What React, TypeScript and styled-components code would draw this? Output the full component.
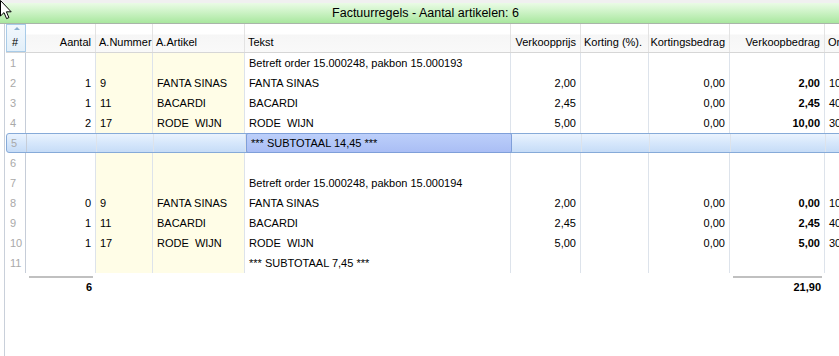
import { FC } from 'react';
import styled, { createGlobalStyle, css } from 'styled-components';

const GlobalStyle = createGlobalStyle`
  html, body {
    margin: 0;
    padding: 0;
    background: #ffffff;
    overflow: hidden;
  }
  body {
    font-family: 'Liberation Sans', Arial, sans-serif;
    font-size: 11px;
    color: #000;
  }
`;

const COLUMNS = '20px 70px 57px 92px 266px 70px 68px 81px 95px 70px';
const GRID_WIDTH = '889px';

const Window = styled.div`
  position: relative;
  width: 839px;
  height: 356px;
  overflow: hidden;
  background: #fff;
`;

const TopStrip = styled.div`
  height: 3px;
  background: #f0f0f0;
`;

const TitleBar = styled.div`
  height: 20px;
  display: flex;
  align-items: center;
  justify-content: center;
  background: linear-gradient(to bottom, #eafbe6 0%, #cdf3c6 45%, #a9e79f 100%);
  border-bottom: 1px solid #a9b5a9;
  font-size: 12.5px;
  padding-left: 12px;
`;

const Panel = styled.div`
  margin-left: 4px;
  border-left: 1px solid #c9d0da;
  height: 332px;
  padding-left: 1px;
`;

const HeaderRow = styled.div`
  display: grid;
  grid-template-columns: ${COLUMNS};
  width: ${GRID_WIDTH};
  height: 28px;
  border-bottom: 1px solid #d6d6d6;
  background: linear-gradient(to bottom, #ffffff 0%, #ffffff 35%, #f6f6f6 40%, #f9f9f9 100%);
`;

const HeaderCell = styled.div<{ $align?: 'left' | 'right'; $sorted?: boolean }>`
  position: relative;
  display: flex;
  align-items: flex-end;
  justify-content: ${(p) => (p.$align === 'right' ? 'flex-end' : 'flex-start')};
  padding: 0 4px 4px 3px;
  border-right: 1px solid #e3e3e3;
  white-space: nowrap;
  overflow: hidden;
  ${(p) =>
    p.$sorted &&
    css`
      background: linear-gradient(to bottom, #f2f8fd, #e2eff9);
      border: 1px solid #a8cbe8;
      padding-left: 5px;
      padding-bottom: 3px;
    `}
`;

const SortArrow = styled.span`
  position: absolute;
  top: 2px;
  left: 7px;
  width: 0;
  height: 0;
  border-left: 3px solid transparent;
  border-right: 3px solid transparent;
  border-bottom: 3px solid #8ab0d0;
`;

const Row = styled.div<{ $selected?: boolean }>`
  display: grid;
  grid-template-columns: ${COLUMNS};
  width: ${GRID_WIDTH};
  height: 20px;
  box-sizing: border-box;
  ${(p) =>
    p.$selected &&
    css`
      background: linear-gradient(to bottom, #eaf3fe 0%, #d6e7fb 50%, #c6dcf7 100%);
      border: 1px solid #86aad8;
      border-radius: 3px;
    `}
`;

const Cell = styled.div<{
  $align?: 'left' | 'right';
  $yellow?: boolean;
  $bold?: boolean;
  $muted?: boolean;
  $focus?: boolean;
  $dark?: boolean;
}>`
  display: flex;
  align-items: center;
  justify-content: ${(p) => (p.$align === 'right' ? 'flex-end' : 'flex-start')};
  padding: 0 4px;
  white-space: pre;
  overflow: hidden;
  border-right: 1px solid ${(p) => (p.$dark ? '#c6cdd8' : '#dde3eb')};
  background: ${(p) => (p.$yellow ? '#fffde7' : 'transparent')};
  font-weight: ${(p) => (p.$bold ? 700 : 400)};
  color: ${(p) => (p.$muted ? '#a9a9a9' : '#000')};
  ${(p) =>
    p.$focus &&
    css`
      background: linear-gradient(to bottom, #bccffa, #aabef5);
      border: 1px solid #7f9fd9;
      border-radius: 2px;
      margin: -1px 0;
    `}
`;

const FooterRow = styled.div`
  display: grid;
  grid-template-columns: ${COLUMNS};
  width: ${GRID_WIDTH};
  height: 20px;
  margin-top: 3px;
`;

const Total = styled.div<{ $filled?: boolean }>`
  display: flex;
  align-items: center;
  justify-content: flex-end;
  margin: 0 3px;
  padding-right: 1px;
  font-weight: 700;
  border-top: 2px solid ${(p) => (p.$filled ? '#c0c0c0' : 'transparent')};
`;

const Cursor = styled.svg`
  position: absolute;
  top: 0;
  left: 0;
`;

type Line = {
  n: number;
  aantal?: string;
  nummer?: string;
  artikel?: string;
  tekst?: string;
  prijs?: string;
  korting?: string;
  kortingsbedrag?: string;
  bedrag?: string;
  or?: string;
  selected?: boolean;
};

const lines: Line[] = [
  { n: 1, tekst: 'Betreft order 15.000248, pakbon 15.000193' },
  { n: 2, aantal: '1', nummer: '9', artikel: 'FANTA SINAS', tekst: 'FANTA SINAS', prijs: '2,00', kortingsbedrag: '0,00', bedrag: '2,00', or: '10' },
  { n: 3, aantal: '1', nummer: '11', artikel: 'BACARDI', tekst: 'BACARDI', prijs: '2,45', kortingsbedrag: '0,00', bedrag: '2,45', or: '40' },
  { n: 4, aantal: '2', nummer: '17', artikel: 'RODE  WIJN', tekst: 'RODE  WIJN', prijs: '5,00', kortingsbedrag: '0,00', bedrag: '10,00', or: '30' },
  { n: 5, tekst: '*** SUBTOTAAL 14,45 ***', selected: true },
  { n: 6 },
  { n: 7, tekst: 'Betreft order 15.000248, pakbon 15.000194' },
  { n: 8, aantal: '0', nummer: '9', artikel: 'FANTA SINAS', tekst: 'FANTA SINAS', prijs: '2,00', kortingsbedrag: '0,00', bedrag: '0,00', or: '10' },
  { n: 9, aantal: '1', nummer: '11', artikel: 'BACARDI', tekst: 'BACARDI', prijs: '2,45', kortingsbedrag: '0,00', bedrag: '2,45', or: '40' },
  { n: 10, aantal: '1', nummer: '17', artikel: 'RODE  WIJN', tekst: 'RODE  WIJN', prijs: '5,00', kortingsbedrag: '0,00', bedrag: '5,00', or: '30' },
  { n: 11, tekst: '*** SUBTOTAAL 7,45 ***' },
];

const App: FC = () => (
  <>
    <GlobalStyle />
    <Window>
      <TopStrip />
      <TitleBar>Factuurregels - Aantal artikelen: 6</TitleBar>
      <Panel>
        <HeaderRow>
          <HeaderCell $sorted>
            <SortArrow />#
          </HeaderCell>
          <HeaderCell $align="right">Aantal</HeaderCell>
          <HeaderCell>A.Nummer</HeaderCell>
          <HeaderCell>A.Artikel</HeaderCell>
          <HeaderCell>Tekst</HeaderCell>
          <HeaderCell $align="right">Verkoopprijs</HeaderCell>
          <HeaderCell>Korting (%).</HeaderCell>
          <HeaderCell $align="right">Kortingsbedrag</HeaderCell>
          <HeaderCell $align="right">Verkoopbedrag</HeaderCell>
          <HeaderCell>Orderregel</HeaderCell>
        </HeaderRow>
        {lines.map((l) => (
          <Row key={l.n} $selected={l.selected}>
            <Cell $muted $dark>{l.n}</Cell>
            <Cell $align="right">{l.aantal}</Cell>
            <Cell $yellow={!l.selected}>{l.nummer}</Cell>
            <Cell $yellow={!l.selected}>{l.artikel}</Cell>
            <Cell $focus={l.selected}>{l.tekst}</Cell>
            <Cell $align="right">{l.prijs}</Cell>
            <Cell $align="right">{l.korting}</Cell>
            <Cell $align="right">{l.kortingsbedrag}</Cell>
            <Cell $align="right" $bold>{l.bedrag}</Cell>
            <Cell>{l.or}</Cell>
          </Row>
        ))}
        <FooterRow>
          <div />
          <Total $filled>6</Total>
          <div />
          <div />
          <div />
          <div />
          <div />
          <div />
          <Total $filled>21,90</Total>
          <div />
        </FooterRow>
      </Panel>
      <Cursor width="13" height="20" viewBox="0 0 13 20">
        <path
          d="M0.5 0.5 L0.5 16 L4 12.6 L6.6 18.6 L8.9 17.6 L6.4 11.8 L11.2 11.8 Z"
          fill="#ffffff"
          stroke="#000000"
          strokeWidth="1"
          strokeLinejoin="miter"
        />
      </Cursor>
    </Window>
  </>
);

export default App;
